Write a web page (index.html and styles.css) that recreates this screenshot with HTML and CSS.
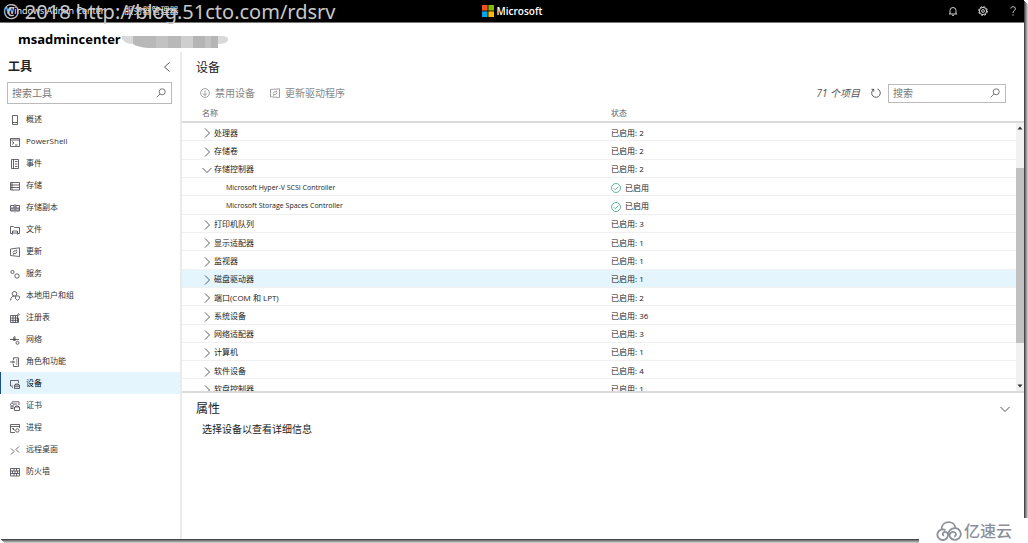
FILE: index.html
```html
<!DOCTYPE html>
<html lang="zh-CN">
<head>
<meta charset="utf-8">
<title>msadmincenter - Windows Admin Center</title>
<link rel="stylesheet" href="styles.css">
</head>
<body>
<svg class="defs" aria-hidden="true">
  <symbol id="right" viewBox="0 0 10 10"><path d="M3 .5 7.500 5 3 9.500"/></symbol>
  <symbol id="down" viewBox="0 0 10 10"><path d="M.5 3 5 7.500 9.500 3"/></symbol>
  <symbol id="search" viewBox="0 0 10 10"><circle cx="6.200" cy="3.800" r="3"/><path d="M4 6 .7 9.300"/></symbol>
  <symbol id="ok" viewBox="0 0 10 10"><circle cx="5" cy="5" r="4.500"/><path d="M2.700 5.200 4.300 6.800 7.400 3.600"/></symbol>
</svg>
<div class="window">
  <header class="topbar">
    <nav class="crumbs"><a href="#">Windows Admin Center</a><a href="#">服务器管理器</a></nav>
    <div class="brand">
      <svg viewBox="0 0 12 12" aria-hidden="true"><path fill="#f25022" d="M0 0h5.600v5.600H0z"/><path fill="#7fba00" d="M6.400 0H12v5.600H6.400z"/><path fill="#00a4ef" d="M0 6.400h5.600V12H0z"/><path fill="#ffb900" d="M6.400 6.400H12V12H6.400z"/></svg>
      <span>Microsoft</span>
    </div>
    <div class="actions">
      <button aria-label="通知"><svg class="icon" viewBox="0 0 10 10"><path d="M1 8h8M2 8V4.500a3 3 0 0 1 6 0V8M4 9.300h2"/></svg></button>
      <button aria-label="设置"><svg class="icon" viewBox="0 0 10 10"><circle cx="5" cy="5" r="4.400" stroke-dasharray="2 1.450"/><circle cx="5" cy="5" r="3.600"/><circle cx="5" cy="5" r="1.400"/></svg></button>
      <button aria-label="帮助"><svg class="icon" viewBox="0 0 10 10"><path d="M2.800 2.500C3 .1 7.400 0 7.400 2.700 7.400 4.500 5 4.700 5 7M5 8.500v1.200"/></svg></button>
    </div>
    <div class="stamp">© 2018 http://blog.51cto.com/rdsrv</div>
  </header>

  <div class="server">
    <h1>msadmincenter</h1>
    <svg viewBox="0 0 108 12" aria-hidden="true"><path fill="#d9d9d9" d="M1 0h102q5 1 4 4-1 4-10 4H12Q4 8 1 3z"/><path fill="#b8b8b8" d="M12 0h48v12H28Q16 11 12 8z"/><path fill="#cecece" d="M60 0h12v12H60z"/><path fill="#b5b5b5" d="M72 0h25v12H72z"/><path fill="#c2c2c2" d="M35 0h12v12H35zM84 0h6v12h-6z"/></svg>
  </div>

  <div class="body">
    <aside class="tools">
      <div class="tools-head"><h2>工具</h2><button aria-label="折叠"><svg class="icon" viewBox="0 0 10 10"><path d="M7.500.5 2.500 5l5 4.500"/></svg></button></div>
      <label class="search"><input type="text" placeholder="搜索工具" aria-label="搜索工具"><svg class="icon"><use href="#search"/></svg></label>
      <nav class="menu">
        <a href="#"><svg class="icon" viewBox="0 0 10 10"><path d="M2.500.5h5v9h-5zM2.500 7.500h5"/></svg>概述</a>
        <a href="#"><svg class="icon" viewBox="0 0 10 10"><path d="M.5 1.500h9v8h-9zM.5 3h9M2 4.500 4 6 2 7.500M5 8h2.500"/></svg>PowerShell</a>
        <a href="#"><svg class="icon" viewBox="0 0 10 10"><path d="M1.500.5h7v9h-7zM3.500.5v9M5 2.500h2.500M5 5h2.500M5 7.500h2.500"/></svg>事件</a>
        <a href="#"><svg class="icon" viewBox="0 0 10 10"><path d="M.5 1.500h9v7.500h-9zM.5 4h9M.5 6.500h9M2 1.500V9"/></svg>存储</a>
        <a href="#"><svg class="icon" viewBox="0 0 10 10"><path d="M.5 2.500h3.500v5.500H.5zM6 2.500h3.500v5.500H6zM.5 5h3.500M6 5h3.500M5 1v8.500M2 5v3M8 5v3"/></svg>存储副本</a>
        <a href="#"><svg class="icon" viewBox="0 0 10 10"><path d="M2 8.500H.5V1.500h3l1 1h5v6H8M2.500 9.500V6h5v3.500M2.500 8h5"/></svg>文件</a>
        <a href="#"><svg class="icon" viewBox="0 0 10 10"><path d="M.5 2 9.500.8v8.700L.5 8.500zM3 5.500Q3.500 3 6.500 4V2.800M7 4.800Q6.500 7.500 3.500 6.500v1.200"/></svg>更新</a>
        <a href="#"><svg class="icon" viewBox="0 0 10 10"><circle cx="2.500" cy="3" r="1.600"/><circle cx="7" cy="7" r="2.200"/></svg>服务</a>
        <a href="#"><svg class="icon" viewBox="0 0 10 10"><circle cx="4.500" cy="2.800" r="2.300"/><path d="M.5 9.500Q1 5 4.500 5M5.500 5.500 7.500 4.800l2 .7v2l-2 2-2-2z"/></svg>本地用户和组</a>
        <a href="#"><svg class="icon" viewBox="0 0 10 10"><path d="M.5 2.500h7v7h-7zM.5 5h8M.5 7.300h8M3 2.500v7M5.500 2.500v7M7.500 9.500h1V5M7.500 2l1-1.500 1 1-1 1z"/></svg>注册表</a>
        <a href="#"><svg class="icon" viewBox="0 0 10 10"><path d="M0 4.500h9M3 3l2-1.500V6"/><circle cx="4" cy="4.500" r="1"/><circle cx="7.500" cy="7.800" r="1.500"/></svg>网络</a>
        <a href="#"><svg class="icon" viewBox="0 0 10 10"><path d="M3.500 3V.8h5v8.700h-5V7M0 5h5M3 3.500v3M6 3h1.500M6 5h1.500M6 7h1.500"/></svg>角色和功能</a>
        <a href="#" class="on" aria-current="page"><svg class="icon" viewBox="0 0 10 10"><path d="M3 7H.5V1.500h8V4M2 8.500h1M4.500 6h5v3.500h-5zM5.500 6V5h3v1M4.500 7.700h5"/></svg>设备</a>
        <a href="#"><svg class="icon" viewBox="0 0 10 10"><circle cx="2" cy="3.500" r="1.500"/><path d="M2 1V.8h7V4M1 5v3l1-1 1 1V5M4.500 6h5v3.500h-5zM5.500 6V5h3v1M4 3h3"/></svg>证书</a>
        <a href="#"><svg class="icon" viewBox="0 0 10 10"><path d="M5 9.500H.5V1.500h9V5M.5 3.500h9M2 5l3 2.500M3.500 5v2"/><circle cx="7.300" cy="7.500" r="1.700"/></svg>进程</a>
        <a href="#"><svg class="icon" viewBox="0 0 10 10"><path d="M1 3.500 4 6.500 1 9.500M9 1.500 6 4.500l3 3"/></svg>远程桌面</a>
        <a href="#"><svg class="icon" viewBox="0 0 10 10"><path d="M.5 1.500h9v7.500h-9zM.5 4h9M.5 6.500h9M4 1.500V4M6.500 1.500V4M2.500 4v2.500M5 4v2.500M7.500 4v2.500M4 6.500V9M6.500 6.500V9"/></svg>防火墙</a>
      </nav>
    </aside>

    <main class="main">
      <h2>设备</h2>
      <div class="toolbar">
        <button><svg class="icon" viewBox="0 0 10 10"><circle cx="5" cy="5" r="4.400"/><path d="M5 2.500v5M3 5.500l2 2 2-2"/></svg>禁用设备</button>
        <button><svg class="icon" viewBox="0 0 10 10"><path d="M.5 1.500 9.500.8v8.700L.5 8.800zM3 5.500Q3.500 3 6.500 4V2.800M7 4.800Q6.500 7.500 3.500 6.500v1.200"/></svg>更新驱动程序</button>
        <span class="count">71 个项目</span>
        <button class="refresh" aria-label="刷新"><svg class="icon" viewBox="0 0 10 10"><path d="M6.500 1A4.300 4.300 0 1 1 2.500 1.500M.5 1.300h2.300v2.300"/></svg></button>
        <label class="search"><input type="text" placeholder="搜索" aria-label="搜索"><svg class="icon"><use href="#search"/></svg></label>
      </div>
      <div class="grid-head"><span>名称</span><span>状态</span></div>
      <div class="grid">
        <div class="rows">
        <table>
          <tbody>
          <tr><td><svg class="icon"><use href="#right"/></svg>处理器</td><td>已启用: 2</td></tr>
          <tr><td><svg class="icon"><use href="#right"/></svg>存储卷</td><td>已启用: 2</td></tr>
          <tr><td><svg class="icon"><use href="#down"/></svg>存储控制器</td><td>已启用: 2</td></tr>
          <tr class="child"><td>Microsoft Hyper-V SCSI Controller</td><td><svg class="icon ok"><use href="#ok"/></svg>已启用</td></tr>
          <tr class="child"><td>Microsoft Storage Spaces Controller</td><td><svg class="icon ok"><use href="#ok"/></svg>已启用</td></tr>
          <tr><td><svg class="icon"><use href="#right"/></svg>打印机队列</td><td>已启用: 3</td></tr>
          <tr><td><svg class="icon"><use href="#right"/></svg>显示适配器</td><td>已启用: 1</td></tr>
          <tr><td><svg class="icon"><use href="#right"/></svg>监视器</td><td>已启用: 1</td></tr>
          <tr class="on"><td><svg class="icon"><use href="#right"/></svg>磁盘驱动器</td><td>已启用: 1</td></tr>
          <tr><td><svg class="icon"><use href="#right"/></svg>端口(COM 和 LPT)</td><td>已启用: 2</td></tr>
          <tr><td><svg class="icon"><use href="#right"/></svg>系统设备</td><td>已启用: 36</td></tr>
          <tr><td><svg class="icon"><use href="#right"/></svg>网络适配器</td><td>已启用: 3</td></tr>
          <tr><td><svg class="icon"><use href="#right"/></svg>计算机</td><td>已启用: 1</td></tr>
          <tr><td><svg class="icon"><use href="#right"/></svg>软件设备</td><td>已启用: 4</td></tr>
          <tr><td><svg class="icon"><use href="#right"/></svg>软盘控制器</td><td>已启用: 1</td></tr>
          </tbody>
        </table>
        </div>
        <div class="scroll" aria-hidden="true">
          <svg viewBox="0 0 8 8"><path d="M1.500 5.500h5L4 2.500z"/></svg>
          <div class="track"><div class="thumb"></div></div>
          <svg viewBox="0 0 8 8"><path d="M1.500 2.500h5L4 5.500z"/></svg>
        </div>
      </div>
      <section class="props">
        <div class="props-head"><h2>属性</h2><button aria-label="收起"><svg class="icon"><use href="#down"/></svg></button></div>
        <p>选择设备以查看详细信息</p>
      </section>
    </main>
  </div>
</div>
<div class="badge">
  <svg viewBox="0 0 26 20" aria-hidden="true"><path d="M5.500 8.500C5.500-1 18.500-1 19.500 7M9.500 9.200A5.300 5.300 0 1 0 12 14c0-3-3.500-4-4.800-2.300-1 1.300-.2 2.800 1 2.800M12 14c0-4 3-6.800 7-6.800a5.800 5.800 0 1 1-5 8.800M14 16c-1.500-3.500 2-6 4.500-4.800 2.200 1 1.800 4-.3 4.300"/></svg>
  <span>亿速云</span>
</div>
</body>
</html>
```
FILE: styles.css
```css
* { box-sizing: border-box; }
html, body { height: 100%; }
body {
  margin: 0;
  padding: 0 4px 4px 0;
  overflow: hidden;
  background: #fff;
  color: #333;
  font: 8px/12px "Open Sans", "Noto Sans CJK SC", sans-serif;
}
h1, h2, p { margin: 0; }
a { color: inherit; text-decoration: none; }
button { padding: 0; border: 0; background: none; color: inherit; font: inherit; display: flex; align-items: center; }
.defs { display: none; }
.icon { width: 10px; height: 10px; flex: none; fill: none; stroke: currentColor; stroke-width: 0.8; }

.window {
  display: flex;
  flex-direction: column;
  height: 100%;
  background: #fff;
  box-shadow: 1px 1px #484848, 2px 2px #777, 3px 3px #a0a0a0, 4px 4px #c4c4c4;
}

.topbar {
  position: relative;
  display: grid;
  grid-template-columns: 1fr auto 1fr;
  align-items: center;
  height: 23px;
  flex: none;
  background: #000;
  border-bottom: 1px solid #777;
  color: #fff;
}
.crumbs { display: flex; gap: 20px; padding-left: 6px; font-size: 9px; }
.brand { display: flex; align-items: center; gap: 3px; font-size: 10px; font-weight: 600; }
.brand svg { width: 12px; height: 12px; }
.actions { display: flex; justify-content: flex-end; gap: 20px; padding-right: 6px; }
.stamp {
  position: absolute;
  left: 3px;
  top: 0;
  color: #c8c8c8;
  font: 20px/24px "Noto Sans", sans-serif;
  white-space: nowrap;
}

.server { display: flex; align-items: center; height: 29px; flex: none; padding: 2px 0 0 18px; }
.server h1 { color: #000; font-size: 13px; line-height: 18px; font-weight: 700; }
.server svg { width: 108px; height: 12px; margin-top: 6px; }

.body { display: flex; flex: 1; min-height: 0; }
.tools { width: 182px; flex: none; border-right: 2px solid #eaeaea; }
.tools-head { display: flex; justify-content: space-between; align-items: center; height: 30px; padding: 0 8px; }
h2 { color: #222; font-size: 12px; line-height: 18px; font-weight: 400; }
.tools-head h2 { font-weight: 700; }
.search {
  display: flex;
  align-items: center;
  height: 22px;
  padding: 0 5px 0 4px;
  border: 1px solid #bbb;
  color: #555;
}
.search input { flex: 1; min-width: 0; padding: 0; border: 0; outline: 0; background: none; font: inherit; font-size: 10px; }
.search input::placeholder { color: #777; opacity: 1; }
.tools .search { margin: 0 8px 0 7px; }
.menu { padding-top: 4px; }
.menu a { display: flex; align-items: center; gap: 6px; height: 22px; padding-left: 10px; }
.menu .icon { margin-top: 2px; color: #44404a; }
.menu .on { background: #e5f5fd; box-shadow: inset 1px 0 #1f4e8c; color: #000; }

.main { display: flex; flex-direction: column; flex: 1; min-width: 0; }
.main > h2 { padding: 7px 0 0 14px; }
.toolbar { display: flex; align-items: center; gap: 15px; height: 32px; padding: 0 18px; color: #888; font-size: 10px; }
.toolbar button { gap: 5px; }
.count { margin-left: auto; color: #555; font-style: italic; }
.toolbar .refresh { margin: 0 -8px 0 -4px; color: #333; }
.toolbar .search { width: 118px; height: 19px; }
.grid-head { display: grid; grid-template-columns: 409px 1fr; height: 14px; padding-left: 20px; border-bottom: 2px solid #dadada; color: #666; line-height: 8px; }
.grid { display: flex; height: 270px; flex: none; border-bottom: 2px solid #dadada; }
.rows { flex: 1; overflow: hidden; }
table { width: 100%; height: 275px; border-collapse: collapse; table-layout: fixed; }
td { padding: 2px 0 0; border-bottom: 1px solid #f0f0f0; color: #222; line-height: 12px; vertical-align: middle; }
td:first-child { width: 429px; padding-left: 20px; }
.child td:first-child { padding-left: 44px; font-size: 7px; }
td .icon { margin-right: 2px; vertical-align: middle; color: #333; }
td .ok { margin-right: 4px; color: #3ba57c; }
tr.on { background: #e5f5fd; }
.scroll { display: flex; flex-direction: column; width: 8px; background: #f1f1f1; }
.scroll svg { width: 8px; height: 10px; fill: #333; }
.track { flex: 1; padding-top: 35px; }
.thumb { height: 175px; background: #c1c1c1; }

.props { padding: 7px 14px 0; }
.props-head { display: flex; justify-content: space-between; align-items: center; }
.props-head button { color: #222; }
.props p { padding: 4px 0 0 6px; color: #222; font-size: 10px; line-height: 14px; }

.badge {
  position: absolute;
  right: 0;
  bottom: 0;
  display: flex;
  align-items: center;
  gap: 2px;
  height: 25px;
  padding: 0 16px 0 17px;
  background: #fff;
  color: #8b909b;
  font-size: 16px;
  font-weight: 500;
}
.badge svg { width: 26px; height: 20px; fill: none; stroke: currentColor; stroke-width: 1.8; }
```
